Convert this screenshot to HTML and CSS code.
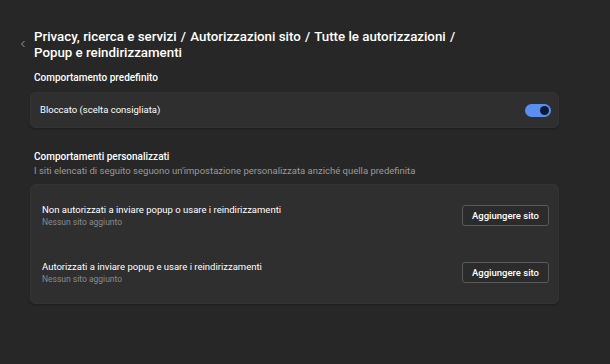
FILE: index.html
```html
<!doctype html>
<html lang="it">
  <head>
    <meta charset="UTF-8" />
    <meta name="viewport" content="width=device-width, initial-scale=1.0" />
    <title>Popup e reindirizzamenti</title>
    <link rel="stylesheet" href="styles.css">
  </head>
  <body>
    <div class="page">
      <div class="header">
        <button class="back">
          <svg width="8" height="8" viewBox="0 0 8 8"><path d="M5.5 1 L2.5 4 L5.5 7" fill="none" stroke="#9a9a9a" stroke-width="1"/></svg>
        </button>
        <h1>Privacy, ricerca e servizi <span class="sep">/</span> Autorizzazioni sito <span class="sep">/</span> Tutte le autorizzazioni <span class="sep">/</span><br>Popup e reindirizzamenti</h1>
      </div>

      <h2>Comportamento predefinito</h2>
      <div class="card single">
        <span class="label">Bloccato (scelta consigliata)</span>
        <span class="toggle"><span class="knob"></span></span>
      </div>

      <h2 class="custom">Comportamenti personalizzati</h2>
      <p class="desc">I siti elencati di seguito seguono un'impostazione personalizzata anziché quella predefinita</p>
      <div class="card list">
        <div class="row">
          <div>
            <div class="label">Non autorizzati a inviare popup o usare i reindirizzamenti</div>
            <div class="sub">Nessun sito aggiunto</div>
          </div>
          <button class="add">Aggiungere sito</button>
        </div>
        <div class="row">
          <div>
            <div class="label">Autorizzati a inviare popup e usare i reindirizzamenti</div>
            <div class="sub">Nessun sito aggiunto</div>
          </div>
          <button class="add">Aggiungere sito</button>
        </div>
      </div>
    </div>
  </body>
</html>
```

FILE: styles.css
```css
body {
  margin: 0;
  background: #272727;
  color: #ffffff;
  font-family: Roboto, "Noto Sans", sans-serif;
  height: 364px;
  overflow: hidden;
}
.page {
  width: 529px;
  margin-left: 30px;
  padding-top: 29px;
}
.header {
  display: flex;
  align-items: flex-start;
  margin-left: -11px;
}
.back {
  background: none;
  border: none;
  padding: 0;
  width: 15px;
  margin-top: 11px;
  display: flex;
  justify-content: flex-start;
}
h1 {
  margin: 0;
  font-size: 13.3px;
  font-weight: 500;
  line-height: 16px;
}
.sep {
  margin: 0 1px;
}
h2 {
  margin: 10px 0 0 4px;
  font-size: 10px;
  font-weight: 500;
  line-height: 14px;
}
.custom {
  margin-top: 22px;
}
.desc {
  margin: 0 0 0 4px;
  font-size: 9.5px;
  line-height: 13px;
  color: #9a9a9a;
}
.card {
  background: #2f2f2f;
  border: 1px solid #333333;
  border-radius: 5px;
  box-shadow: 0 1px 2px rgba(0, 0, 0, 0.25);
}
.single {
  margin-top: 7px;
  height: 34px;
  display: flex;
  align-items: center;
  justify-content: space-between;
  padding: 0 7px 0 9px;
}
.label {
  font-size: 9.5px;
  line-height: 12px;
  color: #ffffff;
}
.toggle {
  width: 26px;
  height: 13px;
  border-radius: 7px;
  background: #5a8ff0;
  display: flex;
  align-items: center;
  justify-content: flex-end;
  padding-right: 2px;
  box-sizing: border-box;
}
.knob {
  width: 9px;
  height: 9px;
  border-radius: 50%;
  background: #0c1a3a;
}
.list {
  margin-top: 7px;
  padding: 2px 0;
}
.row {
  height: 57px;
  display: flex;
  align-items: center;
  justify-content: space-between;
  padding: 0 9px 0 11px;
}
.sub {
  font-size: 8.5px;
  line-height: 11px;
  color: #8a8a8a;
  margin-top: 1px;
}
.add {
  width: 87px;
  height: 21px;
  background: #2b2b2b;
  border: 1px solid #5a5a5a;
  border-radius: 3px;
  color: #ffffff;
  font-family: Roboto, "Noto Sans", sans-serif;
  font-size: 9.5px;
  font-weight: 500;
  padding: 0;
}
```
